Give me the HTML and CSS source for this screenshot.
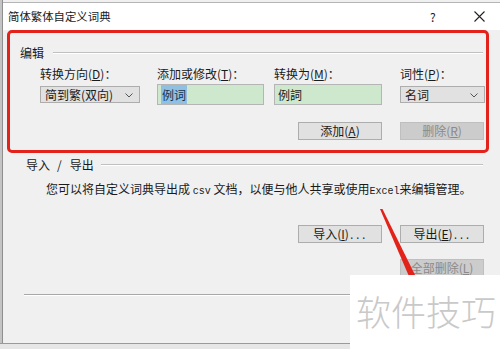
FILE: index.html
```html
<!DOCTYPE html>
<html lang="zh-CN">
<head>
    <meta charset="UTF-8">
    <title>简体繁体自定义词典</title>
    <link rel="stylesheet" href="styles.css">
</head>
<body>
    <div class="screen">
        <div class="main">
            <div class="edge"></div>
            <div class="dialog">
                <div class="titlebar">
                    <span class="title">简体繁体自定义词典</span>
                    <span class="help">?</span>
                    <span class="close">
                        <svg width="11" height="11" viewBox="0 0 11 11"><path d="M0.5 0.5 L10.5 10.5 M10.5 0.5 L0.5 10.5" stroke="#222" stroke-width="1.1" fill="none"/></svg>
                    </span>
                </div>

                <section class="edit-box">
                    <div class="legend"><span>编辑</span></div>
                    <div class="fields">
                        <label>转换方向(<u>D</u>)：</label>
                        <label>添加或修改(<u>T</u>)：</label>
                        <label>转换为(<u>M</u>)：</label>
                        <label>词性(<u>P</u>)：</label>

                        <div class="select wide">简到繁(双向)
                            <svg class="chev" width="8" height="5" viewBox="0 0 8 5"><path d="M0.5 0.5 L4 4 L7.5 0.5" stroke="#555" fill="none"/></svg>
                        </div>
                        <div class="input first"><span class="sel">例词</span></div>
                        <div class="input">例詞</div>
                        <div class="select">名词
                            <svg class="chev" width="8" height="5" viewBox="0 0 8 5"><path d="M0.5 0.5 L4 4 L7.5 0.5" stroke="#555" fill="none"/></svg>
                        </div>
                    </div>
                    <div class="actions">
                        <button class="btn">添加(<u>A</u>)</button>
                        <button class="btn" disabled>删除(<u>R</u>)</button>
                    </div>
                </section>

                <section class="io">
                    <div class="legend"><span>导入<i class="slash">/</i>导出</span></div>
                    <p class="note">您可以将自定义词典导出成 <span class="mono">csv</span> 文档，以便与他人共享或使用<span class="mono">Excel</span>来编辑管理。</p>
                    <div class="actions">
                        <button class="btn">导入(<u>I</u>)<span class="mono">...</span></button>
                        <button class="btn">导出(<u>E</u>)<span class="mono">...</span></button>
                    </div>
                    <div class="actions low">
                        <button class="btn" disabled>全部删除(<u>L</u>)</button>
                    </div>
                    <div class="rule"></div>
                </section>
            </div>
        </div>
        <div class="statusbar"></div>

        <svg class="arrow" width="500" height="349" viewBox="0 0 500 349">
            <polygon points="380,209 382.5,209 417,279 411,281" fill="#e2231a"/>
        </svg>
        <div class="watermark">软件技巧</div>
    </div>
</body>
</html>
```

FILE: styles.css
```css
body {
    margin: 0;
    background: #f0f0f0;
    font-family: "Noto Sans CJK SC", "Liberation Sans", sans-serif;
    font-size: 12px;
    color: #1a1a1a;
}
u {
    text-decoration-thickness: 1px;
    text-underline-offset: 1px;
}
.screen {
    position: relative;
    width: 500px;
    height: 349px;
    overflow: hidden;
    display: flex;
    flex-direction: column;
}
.main {
    display: flex;
    height: 343px;
}
.edge {
    width: 2px;
    background: #c4c4c4;
    border-right: 1px solid #8f8f8f;
}
.dialog {
    flex: 1;
    margin-top: 2px;
    border-top: 1px solid #b5b5b5;
    background: #f0f0f0;
}
.titlebar {
    height: 27px;
    display: flex;
    align-items: center;
    background: #ffffff;
    padding-left: 5px;
}
.title {
    flex: 1;
    font-size: 11.4px;
    line-height: 16px;
    margin-top: -1px;
}
.help {
    width: 44px;
    font-size: 12px;
    margin-top: -1px;
}
.close {
    width: 26px;
    display: flex;
    margin-top: -1px;
}

/* 编辑 group, framed in red */
.edit-box {
    margin-left: 4px;
    width: 476px;
    height: 117px;
    border: 3px solid #e3231b;
    border-radius: 5px;
}
.legend {
    display: flex;
    align-items: center;
    line-height: 16px;
}
.legend::after {
    content: "";
    flex: 1;
    height: 1px;
    background: #c0c0c0;
    border-bottom: 1px solid #ffffff;
}
.edit-box .legend {
    padding: 12px 3px 0 10px;
}
.edit-box .legend span {
    margin-right: 9px;
}
.fields {
    display: grid;
    grid-template-columns: 117px 117px 126px 84px;
    grid-template-rows: 16px 21px;
    row-gap: 2px;
    align-items: center;
    margin-top: 5px;
    padding-left: 30px;
}
.fields label {
    line-height: 16px;
}
.select {
    position: relative;
    height: 15px;
    line-height: 15px;
    padding-left: 4px;
    background: #e1e1e1;
    border: 1px solid #adadad;
    width: 79px;
}
.select.wide {
    width: 94px;
}
.chev {
    position: absolute;
    right: 6px;
    top: 6px;
}
.input {
    height: 19px;
    line-height: 19px;
    width: 103px;
    padding-left: 3px;
    background: #cde8cd;
    border: 1px solid #b5b5b5;
}
.input.first {
    width: 102px;
}
.sel {
    background: #8fc0e2;
    color: #16324c;
    padding: 1px 1px;
}
.actions {
    display: flex;
    justify-content: flex-end;
    gap: 18px;
}
.edit-box .actions {
    margin-top: 17px;
    padding-right: 2px;
}
.btn {
    width: 84px;
    height: 18px;
    padding: 0;
    font-family: inherit;
    font-size: 12px;
    line-height: 16px;
    color: #1a1a1a;
    background: #e1e1e1;
    border: 1px solid #adadad;
}
.btn:disabled {
    background: #cccccc;
    border-color: #bfbfbf;
    color: #8a8a8a;
}
.mono {
    font-family: "Liberation Mono", monospace;
    font-size: 10px;
}

/* 导入 / 导出 */
.io .legend {
    margin-top: 4px;
    padding: 0 17px 0 23px;
}
.io .legend span {
    margin-right: 7px;
}
.slash {
    font-style: normal;
    margin: 0 8px 0 7px;
}
.note {
    margin: 8px 0 0 43px;
    line-height: 16px;
}
.io .actions {
    margin-top: 25px;
    padding-right: 16px;
}
.io .actions.low {
    margin-top: 16px;
}
.rule {
    margin: 17px 0 0 21px;
    height: 1px;
    background: #a8a8a8;
    border-bottom: 1px solid #ffffff;
}
.statusbar {
    flex: 1;
    border-top: 1px solid #9a9a9a;
    background: #e6e6e6;
}

/* overlays */
.arrow {
    position: absolute;
    left: 0;
    top: 0;
    pointer-events: none;
}
.watermark {
    position: absolute;
    left: 350px;
    top: 275px;
    width: 144px;
    height: 74px;
    padding-left: 6px;
    background: #ffffff;
    font-size: 35px;
    font-weight: 300;
    line-height: 72px;
    color: #c9c9c9;
}
```
